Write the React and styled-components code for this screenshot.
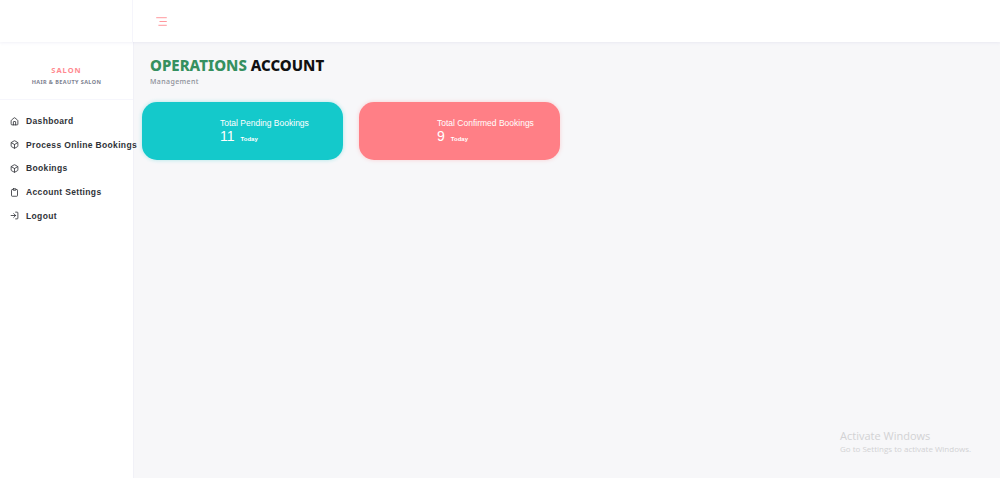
import React from "react";
import styled, { createGlobalStyle } from "styled-components";
import { Home, Box, Clipboard, LogIn, AlignRight } from "lucide-react";

const GlobalStyle = createGlobalStyle`
  html, body {
    margin: 0;
    height: 100%;
    background: #f7f7f9;
    overflow: hidden;
  }
  #root {
    height: 100%;
  }
`;

const Page = styled.div`
  display: grid;
  grid-template-columns: 134px 1fr;
  grid-template-rows: 42px 1fr;
  height: 100vh;
  font-family: "Liberation Sans", Arial, sans-serif;
`;

const TopBar = styled.header`
  grid-column: 1 / 3;
  display: flex;
  align-items: center;
  background: #fff;
  box-shadow: 0 1px 3px rgba(120, 120, 190, 0.1);
  z-index: 2;
`;

const TopLeft = styled.div`
  width: 132px;
  height: 100%;
  border-right: 1px solid #f5f5fb;
`;

const MenuToggle = styled.button`
  display: flex;
  margin-left: 22px;
  padding: 0;
  border: 0;
  background: none;
  color: #ff7f86;
`;

const Sidebar = styled.aside`
  background: #fff;
  border-right: 1px solid #f1f1f7;
`;

const Brand = styled.div`
  height: 58px;
  box-sizing: border-box;
  padding-top: 23px;
  text-align: center;
  border-bottom: 1px solid #f6f6fc;
`;

const BrandName = styled.div`
  font-family: "Noto Sans", sans-serif;
  font-size: 7.5px;
  line-height: 10px;
  font-weight: 700;
  letter-spacing: 1px;
  color: #ff8a90;
`;

const BrandSub = styled.div`
  margin-top: 3px;
  font-family: "Noto Sans", sans-serif;
  font-size: 5.5px;
  line-height: 9px;
  font-weight: 700;
  letter-spacing: 0.4px;
  color: #7d8190;
`;

const Nav = styled.nav`
  display: flex;
  flex-direction: column;
  gap: 9.7px;
  padding: 14px 0 0 10px;
`;

const NavItem = styled.a`
  display: flex;
  align-items: center;
  gap: 7px;
  height: 14px;
  font-size: 8.5px;
  font-weight: 700;
  letter-spacing: 0.35px;
  color: #2f3238;
  white-space: nowrap;

  svg {
    flex: none;
  }
`;

const Main = styled.main`
  position: relative;
  padding: 13px 0 0 8px;
`;

const TitleBlock = styled.div`
  padding-left: 8px;
`;

const Title = styled.h1`
  margin: 0;
  font-family: "Noto Sans", sans-serif;
  font-size: 15px;
  line-height: 20px;
  font-weight: 800;
  color: #111;
`;

const TitleAccent = styled.span`
  color: #359060;
`;

const Subtitle = styled.div`
  margin-top: 2px;
  font-family: "Noto Sans", sans-serif;
  font-size: 7px;
  line-height: 10px;
  font-weight: 500;
  letter-spacing: 0.4px;
  color: #8c8f98;
`;

const Cards = styled.div`
  display: flex;
  gap: 16px;
  margin-top: 15px;
`;

const Card = styled.div`
  width: ${(p) => p.$width}px;
  height: 58px;
  box-sizing: border-box;
  padding: 15px 0 0 78px;
  border-radius: 15px;
  background: ${(p) => p.$color};
  box-shadow: 0 0 4px ${(p) => p.$color}55;
  color: #fff;
`;

const CardTitle = styled.div`
  font-size: 8.5px;
  line-height: 12px;
`;

const CardValue = styled.div`
  display: flex;
  align-items: baseline;
  gap: 6px;
  font-size: 14px;
  line-height: 15px;
`;

const CardUnit = styled.span`
  font-size: 6px;
  font-weight: 700;
`;

const Watermark = styled.div`
  position: absolute;
  left: 706px;
  top: 387px;
  font-family: "Open Sans", sans-serif;
  color: #d2d2d4;
`;

const WatermarkTitle = styled.div`
  font-size: 11px;
  line-height: 14px;
`;

const WatermarkText = styled.div`
  font-size: 8px;
  line-height: 11px;
`;

const navItems = [
  { label: "Dashboard", icon: Home },
  { label: "Process Online Bookings", icon: Box },
  { label: "Bookings", icon: Box },
  { label: "Account Settings", icon: Clipboard },
  { label: "Logout", icon: LogIn },
];

export default function App() {
  return (
    <>
      <GlobalStyle />
      <Page>
        <TopBar>
          <TopLeft />
          <MenuToggle aria-label="Toggle menu">
            <AlignRight size={13} strokeWidth={1.5} />
          </MenuToggle>
        </TopBar>
        <Sidebar>
          <Brand>
            <BrandName>SALON</BrandName>
            <BrandSub>HAIR &amp; BEAUTY SALON</BrandSub>
          </Brand>
          <Nav>
            {navItems.map((item) => (
              <NavItem key={item.label}>
                <item.icon size={9} strokeWidth={2.2} />
                {item.label}
              </NavItem>
            ))}
          </Nav>
        </Sidebar>
        <Main>
          <TitleBlock>
            <Title>
              <TitleAccent>OPERATIONS</TitleAccent> ACCOUNT
            </Title>
            <Subtitle>Management</Subtitle>
          </TitleBlock>
          <Cards>
            <Card $color="#14c9cb" $width={201}>
              <CardTitle>Total Pending Bookings</CardTitle>
              <CardValue>
                11 <CardUnit>Today</CardUnit>
              </CardValue>
            </Card>
            <Card $color="#ff7f86" $width={201}>
              <CardTitle>Total Confirmed Bookings</CardTitle>
              <CardValue>
                9 <CardUnit>Today</CardUnit>
              </CardValue>
            </Card>
          </Cards>
          <Watermark>
            <WatermarkTitle>Activate Windows</WatermarkTitle>
            <WatermarkText>Go to Settings to activate Windows.</WatermarkText>
          </Watermark>
        </Main>
      </Page>
    </>
  );
}
